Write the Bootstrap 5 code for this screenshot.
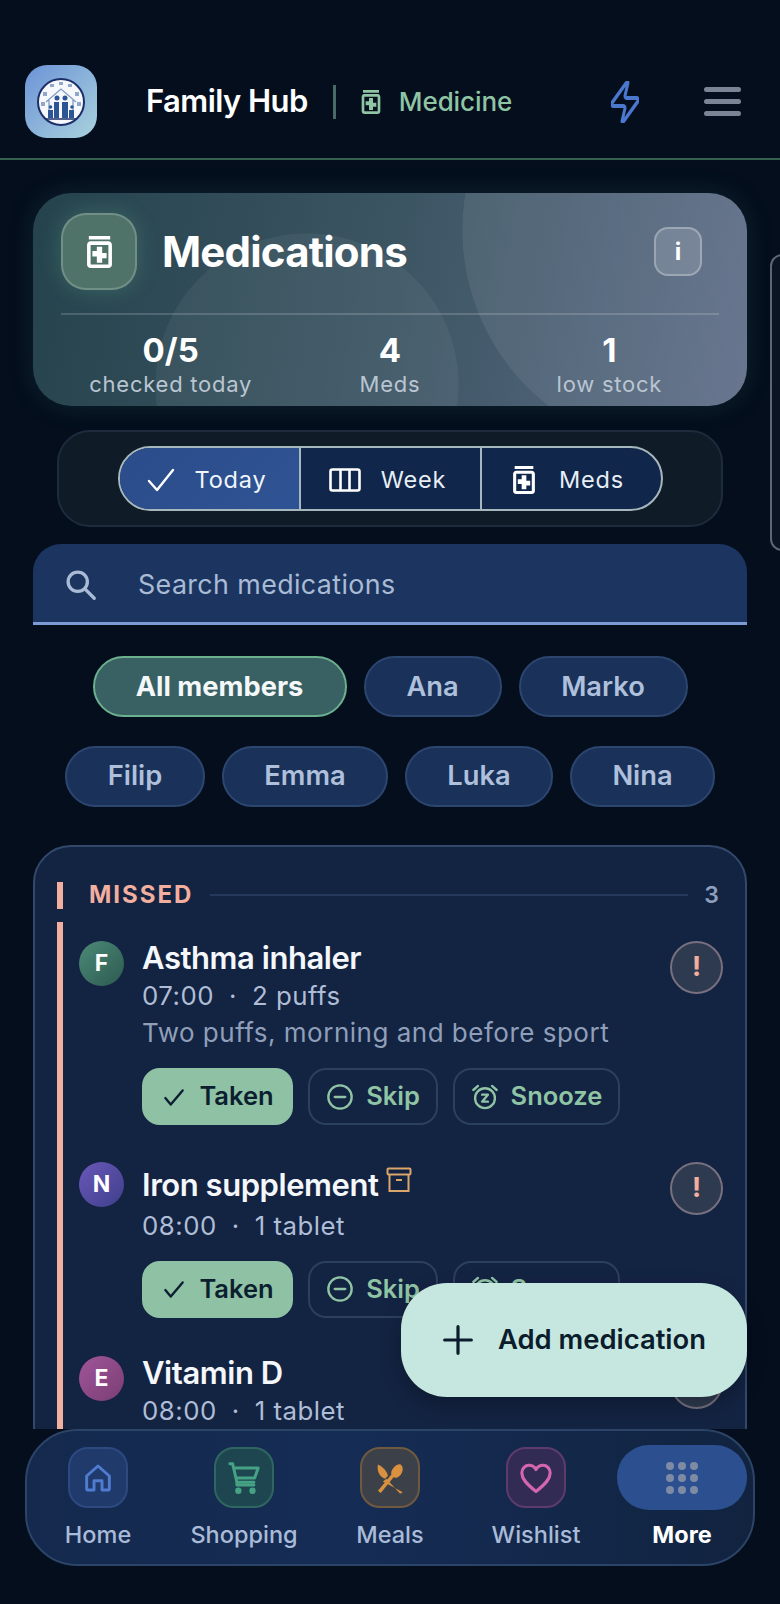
<!doctype html>
<html lang="en">
<head>
<meta charset="utf-8">
<title>Family Hub - Medicine</title>
<link href="https://cdn.jsdelivr.net/npm/bootstrap@5.3.0/dist/css/bootstrap.min.css" rel="stylesheet">
<style>
html,body{margin:0;height:1604px;overflow:hidden;background:#040e1d}
body{font-family:Inter,"Noto Sans","Liberation Sans",sans-serif;color:#fff;-webkit-font-smoothing:antialiased}
.app-shell{position:relative;height:1604px;display:flex;flex-direction:column;background:#040e1d;overflow:hidden}
.top-bar{height:160px;flex:none;padding:65px 0 0 25px;border-bottom:2px solid #35604f;display:flex;align-items:flex-start}
.logo-tile{width:72px;height:73px;border-radius:22px;background:linear-gradient(135deg,#6c93d6,#a9d2de);display:flex;align-items:center;justify-content:center;flex:none}
.brand-txt{font-size:31px;font-weight:600;letter-spacing:-.55px;margin-left:49px;white-space:nowrap}
.brand-wrap{height:73px;display:flex;align-items:center}
.brand-sep{width:3px;height:34px;background:#4a6a68;margin:0 25px 0 25px;flex:none}
.sect-txt{font-size:26px;font-weight:500;color:#8fc4a4;margin-left:18px;letter-spacing:-.1px}
.bolt{margin-left:99px}
.burger{margin-left:65px;width:37px;display:flex;flex-direction:column;gap:7px}
.burger i{display:block;height:5px;border-radius:3px;background:#7a8494}
.page-main{flex:1 1 auto;min-height:0;overflow:hidden;padding:33px 33px 0}
.hero-card{height:213px;border-radius:38px;padding:20px 28px 0;background:radial-gradient(circle 223px at 652px 37px,rgba(255,255,255,.07) 99.6%,transparent 100%),radial-gradient(circle 152px at 274px 192px,rgba(255,255,255,.05) 99.4%,transparent 100%),linear-gradient(100deg,#25434d 0%,#3c5563 50%,#5d6c87 100%);box-shadow:0 0 26px rgba(60,120,110,.22)}
.hero-icon{width:76px;height:77px;border-radius:25px;background:#4f7369;border:2px solid rgba(255,255,255,.2);box-shadow:0 0 22px rgba(120,220,170,.22);flex:none}
.hero-title{font-size:42px;font-weight:700;letter-spacing:-.8px;margin:0 0 0 25px;line-height:1}
.info-btn{width:48px;height:49px;border-radius:14px;background:rgba(255,255,255,.14);border:2px solid rgba(255,255,255,.28);margin:0 17px 0 auto;font-size:24px;font-weight:700;padding:0;color:#fff}
.hero-rule{height:2px;background:rgba(255,255,255,.16);margin:23px 0 0;width:658px}
.stat-num{font-size:33px;font-weight:700;line-height:36px;margin-top:17px}
.stat-lbl{font-size:22px;line-height:28px;color:#bac5d2;letter-spacing:.75px;margin-top:2px}
.seg-wrap{width:666px;height:97px;margin:24px auto 0;border-radius:33px;background:#101b28;border:2px solid #1e2b3d;display:flex;align-items:center;justify-content:center}
.seg-group{width:545px;height:65px;border:2px solid #a7b7be;border-radius:33px;overflow:hidden;display:flex;background:#10264a}
.seg-btn{flex:1 1 0;display:flex;align-items:center;justify-content:center;gap:20px;color:#e8eef5;font-size:23.5px;letter-spacing:.8px;border:0;border-right:2px solid #a7b7be;background:transparent;padding:2px 5px 0 0;border-radius:0}
.seg-btn:last-child{border-right:0;gap:24px}
.seg-btn.on{background:linear-gradient(135deg,#2c4c8a,#2e5394);color:#f0f5fa}
.search-bar{height:81px;margin-top:17px;border-radius:28px 28px 0 0;background:#1c3560;border-bottom:3px solid #7c9ad4;display:flex;align-items:center;padding:2px 31px 0}
.search-ph{margin-left:41px;font-size:26.8px;color:#a9bbd5;letter-spacing:.4px}
.chip-row{display:flex;justify-content:center;gap:17px}
.chip-one{margin-top:31px}.chip-two{margin-top:28.5px}
.chip-pill{height:61px;border-radius:31px;background:#1a3159;border:2px solid #2c4670;color:#aec0db;font-size:27.3px;font-weight:600;display:flex;align-items:center;justify-content:center;padding:1px 0 0}
.chip-pill.on{background:#396062;border-color:#6bb08f;color:#f4f8fa;font-weight:700}
.w253{width:254px}.w137{width:138px}.w170{width:169px}.w140{width:140px}.w165{width:166px}.w148{width:148px}.w145{width:145px}
.meds-panel{margin-top:38.5px;height:700px;border:2px solid #33496c;border-radius:38px;background:#132342;padding:34px 22px 0}
.sect-head{display:flex;align-items:center;height:28px}
.sect-bar{width:6px;height:27px;background:#f2ae9e}
.sect-name{margin-left:26px;font-size:24px;font-weight:700;letter-spacing:2px;color:#f2ae9e}
.sect-line{flex:1;height:2px;background:#24395c;margin:0 16px 0 17px}
.sect-count{font-size:23px;font-weight:600;color:#8ea0bc;margin-right:4px}
.med-stack{margin-top:13px;height:640px;border-left:6px solid #f2ae9e;padding:19px 0 0 16px}
.med-row{display:flex;align-items:flex-start}
.ava{width:45px;height:45px;border-radius:50%;font-size:23px;font-weight:700;display:flex;align-items:center;justify-content:center;flex:none;color:#fff}
.ava-f{background:linear-gradient(135deg,#4c8a77,#2d5a50)}
.ava-n{background:linear-gradient(135deg,#6a58b8,#3f3f8c)}
.ava-e{background:linear-gradient(135deg,#a0559a,#7a3e73)}
.med-body{margin-left:18px;flex:1;min-width:0}
.med-name{font-size:31px;font-weight:600;line-height:36px;letter-spacing:-.45px;color:#f4f7fb;display:flex;align-items:flex-start;margin-top:-1px}
.med-name.lifted{padding-top:6px}
.med-sub{font-size:25.8px;line-height:40px;color:#afbdd6;letter-spacing:.5px}
.med-sub.drop-three{margin-top:3px;margin-bottom:-2px}
.med-note{font-size:26px;line-height:36px;color:#8f9fb9;letter-spacing:.5px;margin-top:-1px}
.dot-sep{margin:0 15px}
.act-row{display:flex;gap:15px;margin-top:17px}
.act-btn{height:57px;border-radius:18px;border:2px solid #2b3f5f;background:transparent;color:#8fc4a4;font-size:25.5px;font-weight:600;display:flex;align-items:center;justify-content:center;gap:12px;padding:0}
.act-btn.ok{background:#8fc2a5;border-color:#8fc2a5;color:#0c1f30}
.w147{width:151px}.w130{width:130px}.w167{width:167px}
.alert-dot{width:53px;height:53px;border-radius:50%;background:#2e3a50;border:2px solid #77707f;color:#f2ae9e;font-size:27px;font-weight:700;display:flex;align-items:center;justify-content:center;flex:none;margin:0 0 0 12px;padding:0}
.gap-iron{margin-top:36.5px}
.gap-vit{margin-top:38.5px}
.fab-add{position:absolute;left:401px;top:1283px;width:346px;height:114px;border-radius:46px;background:#c6e7df;color:#0b1c2c;font-size:27.4px;font-weight:600;display:flex;align-items:center;justify-content:center;gap:24px;border:0;padding:0;box-shadow:0 8px 20px rgba(0,0,0,.25)}
.bottom-nav{flex:none;height:137px;margin:0 25px 38px;border-radius:52px;border:2px solid #2c4468;background:linear-gradient(90deg,#14294d,#152c55 45%,#11233f);display:flex;justify-content:center;padding:14px 0 0}
.nav-cell{width:146px;flex:none;display:flex;flex-direction:column;align-items:center;color:#a9bbd8;font-size:23.5px;font-weight:500;text-decoration:none}
.nav-cell.on{color:#fff;font-weight:700}
.nav-tile{width:60px;height:61px;border-radius:20px;display:flex;align-items:center;justify-content:center;margin-top:2px;border:2px solid}
.t-home{background:#1f3a6b;border-color:#2c4a80}
.t-cart{background:#1d4650;border-color:#2f6660}
.t-meal{background:#3b4049;border-color:#6f5a3f}
.t-wish{background:#322c55;border-color:#5d3b6c}
.t-more{width:130px;height:65px;border-radius:32px;background:#2c4f90;border:0;margin-top:0}
.nav-lbl{margin-top:12px;line-height:30px}
.t-more + .nav-lbl{margin-top:10px}
.side-tab{position:absolute;left:770px;top:254px;width:30px;height:297px;border:2px solid #5c6675;border-radius:12px;background:#0a1422}
</style>
</head>
<body>
<div class="app-shell">
  <header class="top-bar">
    <div class="logo-tile">
      <svg width="48" height="48" viewBox="0 0 48 48" aria-hidden="true">
        <circle cx="24" cy="24" r="23" fill="#f6f8fb" stroke="#1c2f6b" stroke-width="2"/>
        <path d="M9 24 24 11l15 13M12 22v18M36 22v18" fill="none" stroke="#7f9cc4" stroke-width="1.300"/>
        <g fill="#8ea9cc"><rect x="6" y="14" width="4" height="4"/><rect x="38" y="14" width="4" height="4"/><rect x="22" y="4" width="4" height="3"/><rect x="13" y="6" width="4" height="3"/><rect x="31" y="6" width="4" height="3"/><rect x="4" y="24" width="4" height="4"/><rect x="40" y="24" width="4" height="4"/></g>
        <g fill="#2c5596"><circle cx="20" cy="20" r="2.500"/><circle cx="28" cy="20" r="2.500"/><path d="M17 24h5v16h-5zM25 24h6v16h-6z"/><circle cx="13.500" cy="29" r="1.800"/><path d="M11 32h5v8h-5z"/><circle cx="35" cy="29" r="1.800"/><path d="M32 32h5v8h-5z"/></g>
        <path d="M8 41h32" stroke="#1c2f6b" stroke-width="1.500"/>
      </svg>
    </div>
    <div class="brand-wrap">
      <span class="brand-txt">Family Hub</span>
      <span class="brand-sep"></span>
      <svg width="20" height="24" viewBox="5 3 14 18" fill="#8fc4a4" fill-rule="evenodd" aria-hidden="true"><path d="M6 3h12v2H6zm11 3H7c-1.100 0-2 .9-2 2v11c0 1.100.9 2 2 2h10c1.100 0 2-.9 2-2V8c0-1.100-.9-2-2-2zm0 13H7V8h10v11zm-6.500-1h3v-2.500H16v-3h-2.500V9h-3v2.500H8v3h2.500z"/></svg>
      <span class="sect-txt">Medicine</span>
      <svg class="bolt" width="28" height="42" viewBox="2.500 1.500 19 21" preserveAspectRatio="none" fill="none" stroke="#4a78cf" stroke-width="2" stroke-linecap="round" stroke-linejoin="round" aria-hidden="true"><path d="M4 14a1 1 0 0 1-.78-1.630l9.900-10.200a.5.500 0 0 1 .86.460l-1.920 6.020A1 1 0 0 0 13 10h7a1 1 0 0 1 .78 1.630l-9.900 10.200a.5.500 0 0 1-.86-.460l1.920-6.020A1 1 0 0 0 11 14z"/></svg>
      <div class="burger"><i></i><i></i><i></i></div>
    </div>
  </header>

  <main class="page-main">
    <section class="hero-card">
      <div class="d-flex align-items-center">
        <div class="hero-icon d-flex align-items-center justify-content-center">
          <svg width="25" height="32" viewBox="5 3 14 18" fill="#fff" fill-rule="evenodd" aria-hidden="true"><path d="M6 3h12v2H6zm11 3H7c-1.100 0-2 .9-2 2v11c0 1.100.9 2 2 2h10c1.100 0 2-.9 2-2V8c0-1.100-.9-2-2-2zm0 13H7V8h10v11zm-6.500-1h3v-2.500H16v-3h-2.500V9h-3v2.500H8v3h2.500z"/></svg>
        </div>
        <h1 class="hero-title">Medications</h1>
        <button type="button" class="btn info-btn">i</button>
      </div>
      <div class="hero-rule"></div>
      <div class="row g-0 text-center">
        <div class="col-4"><div class="stat-num">0/5</div><div class="stat-lbl">checked today</div></div>
        <div class="col-4"><div class="stat-num">4</div><div class="stat-lbl">Meds</div></div>
        <div class="col-4"><div class="stat-num">1</div><div class="stat-lbl">low stock</div></div>
      </div>
    </section>

    <div class="seg-wrap">
      <div class="seg-group" role="group">
        <button type="button" class="btn seg-btn on">
          <svg width="28" height="24" viewBox="0 0 28 24" fill="none" stroke="#fff" stroke-width="2.400" stroke-linecap="round" stroke-linejoin="round" aria-hidden="true"><path d="M2 13l8 9L26 2"/></svg>Today</button>
        <button type="button" class="btn seg-btn">
          <svg width="32" height="24" viewBox="0 0 32 24" fill="none" stroke="#fff" stroke-width="2.600" aria-hidden="true"><rect x="1.500" y="1.500" width="29" height="21" rx="2"/><path d="M11.500 1.500v21M20.500 1.500v21"/></svg>Week</button>
        <button type="button" class="btn seg-btn">
          <svg width="22" height="28" viewBox="5 3 14 18" fill="#fff" fill-rule="evenodd" aria-hidden="true"><path d="M6 3h12v2H6zm11 3H7c-1.100 0-2 .9-2 2v11c0 1.100.9 2 2 2h10c1.100 0 2-.9 2-2V8c0-1.100-.9-2-2-2zm0 13H7V8h10v11zm-6.500-1h3v-2.500H16v-3h-2.500V9h-3v2.500H8v3h2.500z"/></svg>Meds</button>
      </div>
    </div>

    <div class="search-bar">
      <svg width="33" height="33" viewBox="0 0 24 24" fill="none" stroke="#a9bbd5" stroke-width="2.400" stroke-linecap="round" aria-hidden="true"><circle cx="10" cy="10" r="7"/><path d="M15.200 15.200 22 22"/></svg>
      <span class="search-ph">Search medications</span>
    </div>

    <div class="chip-row chip-one">
      <button type="button" class="btn chip-pill on w253">All members</button>
      <button type="button" class="btn chip-pill w137">Ana</button>
      <button type="button" class="btn chip-pill w170">Marko</button>
    </div>
    <div class="chip-row chip-two">
      <button type="button" class="btn chip-pill w140">Filip</button>
      <button type="button" class="btn chip-pill w165">Emma</button>
      <button type="button" class="btn chip-pill w148">Luka</button>
      <button type="button" class="btn chip-pill w145">Nina</button>
    </div>

    <section class="meds-panel">
      <div class="sect-head">
        <span class="sect-bar"></span><span class="sect-name">MISSED</span><span class="sect-line"></span><span class="sect-count">3</span>
      </div>
      <div class="med-stack">
        <article class="med-row">
          <div class="ava ava-f">F</div>
          <div class="med-body">
            <div class="med-name">Asthma inhaler</div>
            <div class="med-sub">07:00<span class="dot-sep">·</span>2 puffs</div>
            <div class="med-note">Two puffs, morning and before sport</div>
            <div class="act-row">
              <button type="button" class="btn act-btn ok w147"><svg width="26" height="26" viewBox="0 0 24 24" fill="none" stroke="#0c1f30" stroke-width="2.200" stroke-linecap="round" stroke-linejoin="round" aria-hidden="true"><path d="M4 13l5 6L20 6"/></svg>Taken</button>
              <button type="button" class="btn act-btn w130"><svg width="28" height="28" viewBox="0 0 24 24" fill="none" stroke="#8fc4a4" stroke-width="2" stroke-linecap="round" aria-hidden="true"><circle cx="12" cy="12" r="10"/><path d="M7.500 12h9"/></svg>Skip</button>
              <button type="button" class="btn act-btn w167"><svg width="28" height="30" viewBox="0 0 24 24" fill="none" stroke="#8fc4a4" stroke-width="2" stroke-linecap="round" stroke-linejoin="round" aria-hidden="true"><circle cx="12" cy="13" r="8.500"/><path d="M2 6l4-3.500M22 6l-4-3.500M9.500 10h5l-5 6h5"/></svg>Snooze</button>
            </div>
          </div>
          <button type="button" class="btn alert-dot">!</button>
        </article>
        <article class="med-row gap-iron">
          <div class="ava ava-n">N</div>
          <div class="med-body">
            <div class="med-name lifted">Iron supplement<svg class="ms-2" width="26" height="26" viewBox="0 0 26 26" fill="none" stroke="#dca56c" stroke-width="2" aria-hidden="true"><rect x="1.500" y="1.500" width="23" height="6" rx="1"/><path d="M3.500 7.500v16.500h19V7.500M10 13h6"/></svg></div>
            <div class="med-sub drop-three">08:00<span class="dot-sep">·</span>1 tablet</div>
            <div class="act-row">
              <button type="button" class="btn act-btn ok w147"><svg width="26" height="26" viewBox="0 0 24 24" fill="none" stroke="#0c1f30" stroke-width="2.200" stroke-linecap="round" stroke-linejoin="round" aria-hidden="true"><path d="M4 13l5 6L20 6"/></svg>Taken</button>
              <button type="button" class="btn act-btn w130"><svg width="28" height="28" viewBox="0 0 24 24" fill="none" stroke="#8fc4a4" stroke-width="2" stroke-linecap="round" aria-hidden="true"><circle cx="12" cy="12" r="10"/><path d="M7.500 12h9"/></svg>Skip</button>
              <button type="button" class="btn act-btn w167"><svg width="28" height="30" viewBox="0 0 24 24" fill="none" stroke="#8fc4a4" stroke-width="2" stroke-linecap="round" stroke-linejoin="round" aria-hidden="true"><circle cx="12" cy="13" r="8.500"/><path d="M2 6l4-3.500M22 6l-4-3.500M9.500 10h5l-5 6h5"/></svg>Snooze</button>
            </div>
          </div>
          <button type="button" class="btn alert-dot">!</button>
        </article>
        <article class="med-row gap-vit">
          <div class="ava ava-e">E</div>
          <div class="med-body">
            <div class="med-name">Vitamin D</div>
            <div class="med-sub">08:00<span class="dot-sep">·</span>1 tablet</div>
          </div>
          <button type="button" class="btn alert-dot">!</button>
        </article>
      </div>
    </section>
  </main>

  <nav class="bottom-nav">
    <a class="nav-cell" href="#"><span class="nav-tile t-home"><svg width="32" height="34" viewBox="0 0 24 24" fill="none" stroke="#4f7cd0" stroke-width="2.200" stroke-linecap="round" stroke-linejoin="round" aria-hidden="true"><path d="M3.500 10.500 12 3l8.500 7.500V20a1 1 0 0 1-1 1H15v-7H9v7H4.500a1 1 0 0 1-1-1z"/></svg></span><span class="nav-lbl">Home</span></a>
    <a class="nav-cell" href="#"><span class="nav-tile t-cart"><svg width="34" height="34" viewBox="0 0 24 24" fill="none" stroke="#46a284" stroke-width="2.100" stroke-linecap="round" stroke-linejoin="round" aria-hidden="true"><path d="M2 2h2l3 13h12M5.500 5H22l-2.500 7H7"/><path d="M7 15.500v1.500h12"/><circle cx="8" cy="21" r="1.200" fill="#46a284"/><circle cx="18" cy="21" r="1.200" fill="#46a284"/></svg></span><span class="nav-lbl">Shopping</span></a>
    <a class="nav-cell" href="#"><span class="nav-tile t-meal"><svg width="34" height="36" viewBox="0 0 24 24" fill="#d9913f" aria-hidden="true"><path d="M3.500 2.500C7 4 10 7.500 10.500 10.500L8.500 12.500C5 11.500 2.500 7.500 3.500 2.500z"/><path d="M7 14.500 21 22l-1.500 1-.5 0L9.500 12.500z"/><path d="M19.500 2.500c2 1.500 2 5-.2 7.500-1.600 1.700-3.500 2.200-4.800 1.500L5.500 22.500 3.500 21l9.500-11.500c-.5-1.500.2-3.500 1.700-5 1.700-1.800 3.600-2.500 4.800-2z"/></svg></span><span class="nav-lbl">Meals</span></a>
    <a class="nav-cell" href="#"><span class="nav-tile t-wish"><svg width="34" height="34" viewBox="0 0 24 24" fill="none" stroke="#d466ae" stroke-width="2.200" stroke-linejoin="round" aria-hidden="true"><path d="M12 21.500C5 16 2 12.500 2 8.500 2 5 4.500 3 7 3c2 0 4 1.200 5 3 1-1.800 3-3 5-3 2.500 0 5 2 5 5.500 0 4-3 7.500-10 13z"/></svg></span><span class="nav-lbl">Wishlist</span></a>
    <a class="nav-cell on" href="#"><span class="nav-tile t-more"><svg width="34" height="34" viewBox="0 0 34 34" fill="#7d8ba5" aria-hidden="true"><circle cx="5" cy="5" r="4"/><circle cx="17" cy="5" r="4"/><circle cx="29" cy="5" r="4"/><circle cx="5" cy="17" r="4"/><circle cx="17" cy="17" r="4"/><circle cx="29" cy="17" r="4"/><circle cx="5" cy="29" r="4"/><circle cx="17" cy="29" r="4"/><circle cx="29" cy="29" r="4"/></svg></span><span class="nav-lbl">More</span></a>
  </nav>

  <button type="button" class="btn fab-add"><svg width="32" height="32" viewBox="0 0 24 24" fill="none" stroke="#0b1c2c" stroke-width="2.400" stroke-linecap="round" aria-hidden="true"><path d="M12 2v20M2 12h20"/></svg>Add medication</button>
  <div class="side-tab"></div>
</div>
<script src="https://cdn.jsdelivr.net/npm/bootstrap@5.3.0/dist/js/bootstrap.bundle.min.js"></script>
</body>
</html>
